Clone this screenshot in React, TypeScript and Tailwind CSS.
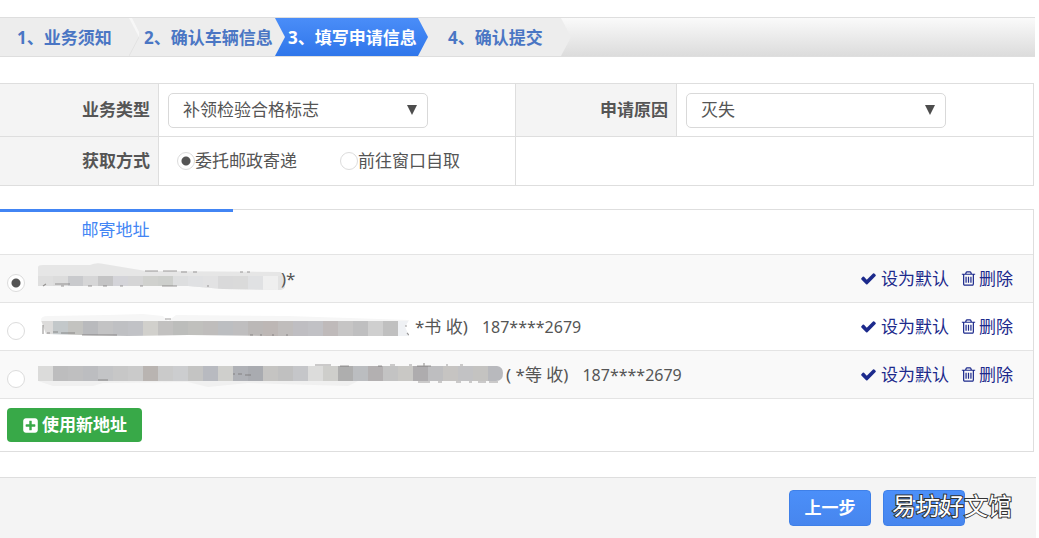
import type { ReactNode } from 'react';

const CHECK =
  'M1671 566q0 40-28 68l-724 724-136 136q-28 28-68 28t-68-28l-136-136-362-362q-28-28-28-68t28-68l136-136q28-28 68-28t68 28l294 295 656-657q28-28 68-28t68 28l136 136q28 28 28 68z';
const TRASH =
  'M704 736v576q0 14-9 23t-23 9h-64q-14 0-23-9t-9-23v-576q0-14 9-23t23-9h64q14 0 23 9t9 23zm256 0v576q0 14-9 23t-23 9h-64q-14 0-23-9t-9-23v-576q0-14 9-23t23-9h64q14 0 23 9t9 23zm256 0v576q0 14-9 23t-23 9h-64q-14 0-23-9t-9-23v-576q0-14 9-23t23-9h64q14 0 23 9t9 23zm128 724v-948h-896v948q0 22 7 40.5t14.5 27 10.5 8.5h832q3 0 10.5-8.5t14.5-27 7-40.5zm-672-1076h448l-48-117q-7-9-17-11h-317q-10 2-17 11zm928 32v64q0 14-9 23t-23 9h-96v948q0 83-47 143.5t-113 60.5h-832q-66 0-113-58.5t-47-141.5v-952h-96q-14 0-23-9t-9-23v-64q0-14 9-23t23-9h309l70-167q15-37 54-63t79-26h320q40 0 79 26t54 63l70 167h309q14 0 23 9t9 23z';
const PLUS =
  'M1408 960v-128q0-26-19-45t-45-19h-320v-320q0-26-19-45t-45-19h-128q-26 0-45 19t-19 45v320h-320q-26 0-45 19t-19 45v128q0 26 19 45t45 19h320v320q0 26 19 45t45 19h128q26 0 45-19t19-45v-320h320q26 0 45-19t19-45zm256-544v960q0 119-84.5 203.5t-203.5 84.5h-960q-119 0-203.5-84.5t-84.5-203.5v-960q0-119 84.5-203.5t203.5-84.5h960q119 0 203.5 84.5t84.5 203.5z';

function Glyph({ d }: { d: string }) {
  return (
    <svg viewBox="0 0 1792 1792" className="size-[17px] shrink-0" fill="currentColor" aria-hidden="true">
      <path d={d} />
    </svg>
  );
}

const RADIO =
  'size-[18px] shrink-0 appearance-none rounded-full border border-[#dcdcdc] bg-white checked:bg-[radial-gradient(circle,#555_0,#555_4px,transparent_5px)]';

function Arrow({ left, right, edge }: { left: string; right: string; edge?: boolean }) {
  return (
    <svg viewBox="0 0 10 38" preserveAspectRatio="none" className="h-[38px] w-[10px] shrink-0" aria-hidden="true">
      <defs>
        <linearGradient id="step-blue" x1="0" y1="0" x2="0" y2="1">
          <stop offset="0" stopColor="#4a8df8" />
          <stop offset="1" stopColor="#2f76ea" />
        </linearGradient>
        <linearGradient id="step-rest" x1="0" y1="0" x2="0" y2="1">
          <stop offset="0" stopColor="#fafafa" />
          <stop offset="1" stopColor="#dcdcdc" />
        </linearGradient>
      </defs>
      <rect width="10" height="38" fill={right} />
      <path d="M0 0L10 19L0 38Z" fill={left} />
      {edge && <path d="M0 0L3 0L10 14L10 19Z" fill="#f7f7f7" />}
      {edge && <path d="M10 19L0 38" stroke="#e2e2e2" strokeWidth="1" fill="none" />}
    </svg>
  );
}

function Label({ children, htmlFor }: { children: ReactNode; htmlFor?: string }) {
  return (
    <div className="flex items-center justify-end border-r border-b border-[#dedede] bg-[#f4f4f4] pr-2 font-bold">
      <label htmlFor={htmlFor}>{children}</label>
    </div>
  );
}

function Dropdown({ id, value }: { id: string; value: string }) {
  return (
    <div className="relative w-[260px]">
      <select
        id={id}
        className="h-[35px] w-full appearance-none rounded-[5px] border border-[#d9d9d9] bg-white pr-8 pl-[14px] text-[17px] text-[#555]"
      >
        <option>{value}</option>
      </select>
      <svg viewBox="0 0 10 10" className="pointer-events-none absolute top-3 right-[11px] size-[10px]" fill="#4d4d4d" aria-hidden="true">
        <path d="M0 0H10L5 10Z" />
      </svg>
    </div>
  );
}

type Smudge = {
  id: string;
  width: number;
  top: number;
  clip: string;
  cells: string[];
  under: string;
  halo: string;
};

const SMUDGES: Smudge[] = [
  {
    id: 'address-1',
    width: 257,
    top: 21,
    clip: 'M10 12Q10 10 15 10L62 10Q68 7 76 9L118 16L252 17Q257 18 257 25L257 31Q257 35 250 35L195 34L160 31L10 31Z',
    cells: ['#dfdfdf', '#dcdcdc', '#c9cacd', '#d6d6d7', '#c4c4c5', '#d4d4d9', '#d5d5d6', '#d0d1ce', '#cdcfcc', '#dddedf', '#e0e1e3', '#e2e2e3', '#d9d9da', '#dadada', '#e0e1e3', '#efefef', '#e3e3e3'],
    under: 'M15 31l3-2M27 29h15M33 31h3M60 31h4M75 31h4M92 31h3M112 31h3M117 16h13M135 16h14M134 31h15M153 17h6M165 17h4M212 17h3M219 17h3M179 31h2',
    halo: '#e6e6e6',
  },
  {
    id: 'address-2',
    width: 381,
    top: 18,
    clip: 'M13 17Q13 13 20 13L80 12L115 11L135 13L140 18L148 12L260 13L381 17L377 24L381 33L240 33L160 32L100 33L55 32L18 31Z',
    cells: ['#dcdbda', '#c3c8ca', '#c3c3c0', '#b9babd', '#c3c3c4', '#bfc0c3', '#c1c2c6', '#d1d0cc', '#c2c1c0', '#bcbdbb', '#c0c0bd', '#bfbdbc', '#bcbec1', '#bfbebf', '#bbb8b7', '#bdb7b5', '#c0bdbc', '#bfbec2', '#c1c1c5', '#bfbaba', '#c6c5c5', '#bfbfc0', '#cfcfcf', '#c0c0c0', '#eff1f4'],
    under: 'M15 22v9M19 30h3M25 29h5M33 30h14M54 32h35M137 16h6M222 32h3M232 32h2M244 32h2M258 32h2M379 30l2 2M377 23h2',
    halo: '#f6f6f6',
  },
  {
    id: 'address-3',
    width: 475,
    top: 15,
    clip: 'M10 15L469 15Q475 16 475 22Q475 30 468 30L330 30L320 35L220 32L180 36L160 31L75 32L65 35L25 35L10 30Z',
    cells: ['#dbdbda', '#bdbdbe', '#bfbfc0', '#bcbdc0', '#c3c4c6', '#c7c7c7', '#cacaca', '#b9b4b1', '#cacaca', '#cccdcf', '#c4c4c3', '#b8bac0', '#cfcfcc', '#afb1b6', '#a9abb0', '#c5c4c2', '#c0c0c0', '#c5c6c9', '#dcdcdb', '#cececb', '#aeaeae', '#bbbdc0', '#b3b0b1', '#c3c3c3', '#c9c8c5', '#aeacae', '#bebec0', '#c6c4c2', '#c2c2c4', '#c4c3c1', '#b8b9bd'],
    under: 'M70 29h10M287 14h16M312 15h9M350 15h4M362 14h5M381 14h3M389 15h14M396 12v3M418 14h2M432 14h3M390 31h12M410 31h4M428 31h5M441 31h3M450 31h8M461 31h9M205 23h2M210 23h4M217 24h6',
    halo: '#f0f0f0',
  },
];

function Redacted({ s }: { s: Smudge }) {
  return (
    <svg width={s.width} height="48" viewBox={'0 0 ' + s.width + ' 48'} className="shrink-0" aria-hidden="true">
      <defs>
        <clipPath id={s.id}>
          <path d={s.clip} />
        </clipPath>
      </defs>
      <g clipPath={'url(#' + s.id + ')'}>
        <rect width={s.width} height="48" fill={s.halo} />
        {s.cells.map((c, i) => (
          <rect key={i} x={10 + i * 15} y={s.top} width="15" height="15" fill={c} />
        ))}
      </g>
      <path d={s.under} stroke="#6d6a69" strokeWidth="1.2" opacity="0.65" fill="none" />
    </svg>
  );
}

const ADDRESSES = [
  { tail: ')*', phone: '', gap: '-ml-1' },
  { tail: '*书 收)', phone: '187****2679', gap: 'ml-[6px]' },
  { tail: '( *等 收)', phone: '187****2679', gap: 'ml-[3px]' },
];

export default function App() {
  return (
    <div className="bg-white pt-[17px] font-['Noto_Sans','Noto_Sans_CJK_SC',sans-serif] text-[17px] leading-6 text-[#555]">
      <ol className="mr-1 flex h-10 items-stretch border-y border-[#dedede] bg-linear-to-b from-[#fafafa] to-[#dcdcdc] font-bold whitespace-nowrap text-[#4a76c4]">
        <li className="flex w-[129px] items-center bg-[#ededed] pt-[2px] pl-[17px]">1、业务须知</li>
        <Arrow left="#ededed" right="#ededed" edge />
        <li className="flex w-[136px] items-center bg-[#ededed] pt-[2px] pl-[5px]">2、确认车辆信息</li>
        <Arrow left="#ededed" right="url(#step-blue)" />
        <li aria-current="step" className="flex w-[133px] items-center bg-linear-to-b from-[#4a8df8] to-[#2f76ea] pt-[2px] pl-[3px] text-white">
          3、填写申请信息
        </li>
        <Arrow left="url(#step-blue)" right="#ededed" />
        <li className="flex w-[133px] items-center bg-[#ededed] pt-[2px] pl-5">4、确认提交</li>
        <Arrow left="#ededed" right="url(#step-rest)" />
      </ol>

      <section className="mt-[26px] mr-[5px] grid grid-cols-[159fr_357fr_161fr_357fr] grid-rows-[53px_49px] border-t border-[#dedede]">
        <Label htmlFor="type">业务类型</Label>
        <div className="flex items-center border-r border-b border-[#dedede] pl-[9px]">
          <Dropdown id="type" value="补领检验合格标志" />
        </div>
        <Label htmlFor="reason">申请原因</Label>
        <div className="flex items-center border-r border-b border-[#dedede] pl-[9px]">
          <Dropdown id="reason" value="灭失" />
        </div>
        <Label>获取方式</Label>
        <div className="flex items-center gap-[43px] border-r border-b border-[#dedede] pl-[18px]">
          <label className="flex items-center">
            <input type="radio" name="method" defaultChecked className={RADIO} />
            委托邮政寄递
          </label>
          <label className="flex items-center">
            <input type="radio" name="method" className={RADIO} />
            前往窗口自取
          </label>
        </div>
        <div className="col-span-2 border-r border-b border-[#dedede]" />
      </section>

      <section className="mt-[23px] mr-[5px] border-r border-b border-[#dedede]">
        <div className="flex h-[45px] border-t border-[#dedede]">
          <h2 className="-mt-px w-[233px] border-t-[3px] border-[#4285f4] pt-[6px] pr-[2px] text-center text-[#4285f4]">
            邮寄地址
          </h2>
        </div>
        <ul>
          {ADDRESSES.map((a, i) => (
            <li key={i} className="flex h-12 items-center border-t border-[#e4e4e4] pr-5 pl-[7px] odd:bg-[#f9f9f9]">
              <label className="flex items-center whitespace-pre">
                <input type="radio" name="address" aria-label={a.tail} defaultChecked={i === 0} className={RADIO + ' mt-2 mr-[3px]'} />
                <Redacted s={SMUDGES[i]} />
                <span className={a.gap}>{a.tail}</span>
                <span className="ml-[14px] text-[16px]">{a.phone}</span>
              </label>
              <div className="ml-auto flex gap-[11px] text-[#1c2a8c]">
                <button type="button" className="flex items-center gap-1">
                  <Glyph d={CHECK} />
                  设为默认
                </button>
                <button type="button" className="flex items-center gap-[2px]">
                  <Glyph d={TRASH} />
                  删除
                </button>
              </div>
            </li>
          ))}
        </ul>
        <div className="border-t border-[#e4e4e4] px-[7px] py-[9px]">
          <button type="button" className="flex h-[34px] items-center gap-[3px] rounded-[4px] bg-[#38a948] px-[15px] font-bold text-white">
            <Glyph d={PLUS} />
            使用新地址
          </button>
        </div>
      </section>

      <footer className="relative mt-[25px] mr-[3px] flex h-[62px] items-start justify-end gap-3 border-t border-[#dedede] bg-[#f4f4f4] pt-3 pr-[71px]">
        <button type="button" className="h-9 w-[82px] rounded-[4px] border border-[#3f80e8] bg-linear-to-b from-[#4b8ff9] to-[#4786ee] font-bold text-white">
          上一步
        </button>
        <button type="button" className="h-9 w-[82px] rounded-[4px] border border-[#3f80e8] bg-linear-to-b from-[#4b8ff9] to-[#4786ee] font-bold text-white">
          下一步
        </button>
        <span className="pointer-events-none absolute top-3 right-6 text-[24px] leading-8 text-white [paint-order:stroke_fill] [-webkit-text-stroke:2px_#333]">
          易坊好文馆
        </span>
      </footer>
    </div>
  );
}
